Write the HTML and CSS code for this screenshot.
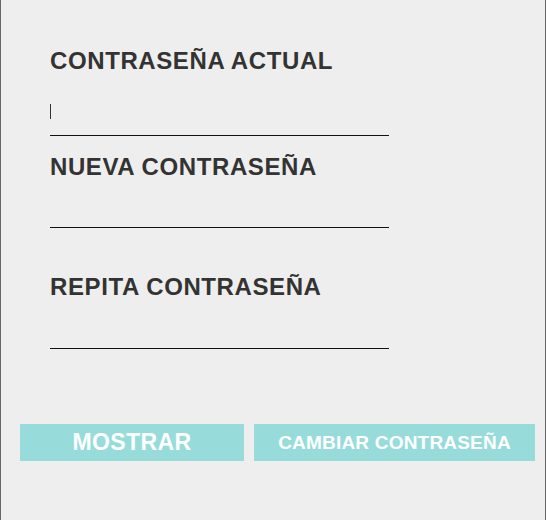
FILE: index.html
```html
<!DOCTYPE html>
<html lang="es">
<head>
<meta charset="utf-8">
<title>Cambiar contraseña</title>
<link rel="stylesheet" href="styles.css">
</head>
<body>
<div class="panel">
  <form class="form">
    <div class="group group-first">
      <div class="label">CONTRASEÑA ACTUAL</div>
      <div class="input input-first"><span class="caret"></span></div>
    </div>
    <div class="group group-second">
      <div class="label">NUEVA CONTRASEÑA</div>
      <div class="input input-second"></div>
    </div>
    <div class="group group-third">
      <div class="label">REPITA CONTRASEÑA</div>
      <div class="input input-third"></div>
    </div>
  </form>
  <div class="actions">
    <button type="button" class="btn btn-show">MOSTRAR</button>
    <button type="button" class="btn btn-change">CAMBIAR CONTRASEÑA</button>
  </div>
</div>
</body>
</html>
```
FILE: styles.css
```css
html, body {
  margin: 0;
  padding: 0;
  background: #eeeeee;
}
.panel {
  box-sizing: border-box;
  width: 546px;
  height: 520px;
  border-left: 1px solid #666666;
  border-right: 1px solid #666666;
  background: #eeeeee;
  font-family: "Liberation Sans", Arial, sans-serif;
}
.form {
  margin: 0;
  padding: 49px 0 0 49px;
  display: flex;
  flex-direction: column;
}
.group {
  width: 339px;
}
.group-second { margin-top: 19px; }
.group-third { margin-top: 47px; }
.label {
  font-size: 24px;
  line-height: 24px;
  letter-spacing: 0.6px;
  font-weight: bold;
  color: #333333;
  white-space: nowrap;
}
.input {
  border-bottom: 1px solid #111111;
  padding-top: 31px;
  box-sizing: border-box;
}
.input-first { height: 63px; }
.input-second { height: 49px; }
.input-third { height: 50px; }
.caret {
  display: block;
  width: 1px;
  height: 15px;
  background: #333333;
}
.actions {
  display: flex;
  gap: 10px;
  padding: 75px 0 0 19px;
}
.btn {
  border: none;
  margin: 0;
  padding: 0;
  height: 37px;
  background: #97dcdb;
  color: #ffffff;
  font-family: "Liberation Sans", Arial, sans-serif;
  font-weight: bold;
  text-align: center;
}
.btn-show {
  width: 224px;
  font-size: 23px;
  letter-spacing: 0.4px;
}
.btn-change {
  width: 281px;
  font-size: 19px;
  letter-spacing: 0.2px;
}
```
